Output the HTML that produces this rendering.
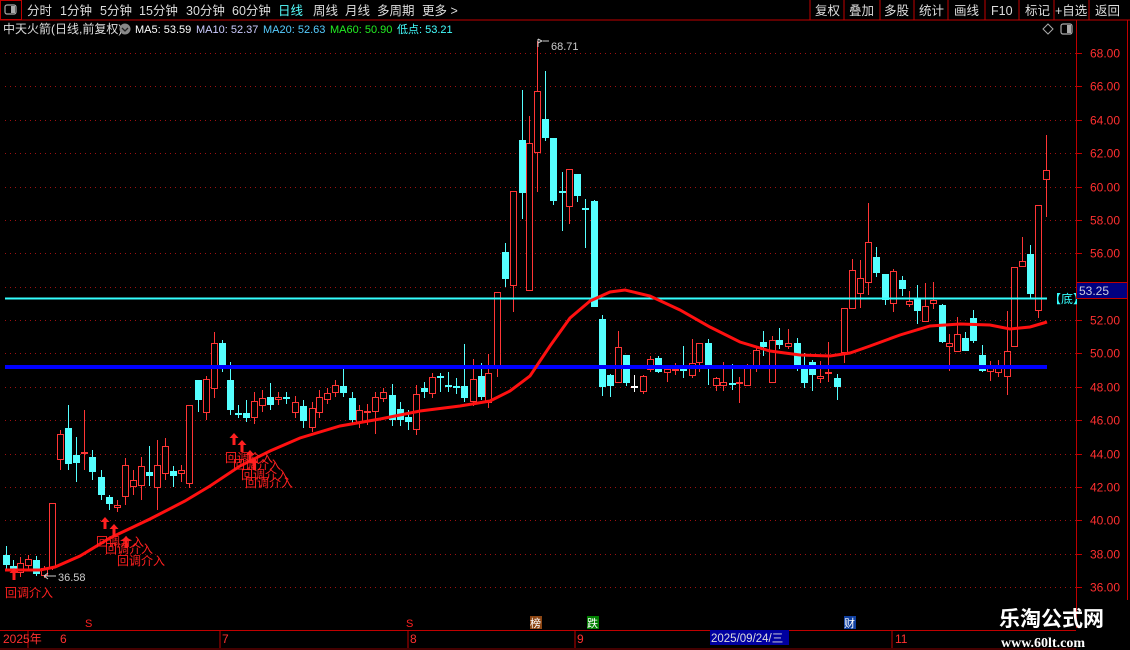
<!DOCTYPE html>
<html><head><meta charset="utf-8">
<style>
html,body{margin:0;padding:0;background:#000;width:1130px;height:650px;overflow:hidden;font-family:"Liberation Sans","Noto Sans CJK SC",sans-serif}
svg{position:absolute;left:0;top:0}
</style></head><body>
<svg id="s" width="1130" height="650" xmlns="http://www.w3.org/2000/svg" font-family="Liberation Sans, Noto Sans CJK SC, sans-serif">
<rect width="1130" height="650" fill="#000"/>
<line x1="0" y1="20" x2="1130" y2="20" stroke="#c00000"/>
<rect x="0.5" y="0.5" width="21" height="19" fill="none" stroke="#c00000"/>
<rect x="5" y="5" width="11" height="9" rx="2" fill="none" stroke="#aaa" stroke-width="1.2"/><rect x="11" y="6" width="4" height="7" fill="#aaa"/>
<g font-size="12.5" fill="#ddd">
<text x="27" y="15">分时</text><text x="60" y="15">1分钟</text><text x="100" y="15">5分钟</text><text x="139" y="15">15分钟</text><text x="186" y="15">30分钟</text><text x="232" y="15">60分钟</text>
<text x="278" y="15" fill="#5ff">日线</text><text x="313" y="15">周线</text><text x="345" y="15">月线</text><text x="377" y="15">多周期</text><text x="422" y="15">更多 &gt;</text>
</g>
<g stroke="#c00000"><line x1="810" y1="0" x2="810" y2="20"/><line x1="844" y1="0" x2="844" y2="20"/><line x1="880" y1="0" x2="880" y2="20"/><line x1="914" y1="0" x2="914" y2="20"/><line x1="948" y1="0" x2="948" y2="20"/><line x1="985" y1="0" x2="985" y2="20"/><line x1="1019" y1="0" x2="1019" y2="20"/><line x1="1054" y1="0" x2="1054" y2="20"/><line x1="1089" y1="0" x2="1089" y2="20"/></g>
<g font-size="12.5" fill="#ddd">
<text x="815" y="15">复权</text><text x="849" y="15">叠加</text><text x="884" y="15">多股</text><text x="919" y="15">统计</text><text x="954" y="15">画线</text><text x="991" y="15">F10</text><text x="1025" y="15">标记</text><text x="1055" y="15">+自选</text><text x="1095" y="15">返回</text>
</g>
<g font-size="11">
<text x="3" y="33" fill="#ddd" font-size="12">中天火箭(日线,前复权)</text>
<circle cx="125" cy="29" r="5.5" fill="#888"/><path d="M122 28l3 3 3-3" stroke="#222" stroke-width="1.3" fill="none"/>
<text x="135" y="33" fill="#fff">MA5: 53.59</text>
<text x="196" y="33" fill="#ccccff">MA10: 52.37</text>
<text x="263" y="33" fill="#5cf">MA20: 52.63</text>
<text x="330" y="33" fill="#2e2">MA60: 50.90</text>
<text x="397" y="33" fill="#4ff">低点: 53.21</text>
</g>
<path d="M1048 24l5 5-5 5-5-5z" fill="none" stroke="#aaa"/>
<rect x="1061" y="24" width="11" height="10" rx="2" fill="none" stroke="#aaa" stroke-width="1.2"/><rect x="1067" y="25" width="4" height="8" fill="#aaa"/>
<line x1="1076.5" y1="20" x2="1076.5" y2="628" stroke="#c00000"/>
<line x1="1127.5" y1="20" x2="1127.5" y2="600" stroke="#c00000"/>
<g id="grid"></g>
<g id="candles"></g>
<line x1="5" y1="298.5" x2="1047" y2="298.5" stroke="#3ff" stroke-width="2"/>
<line x1="5" y1="367" x2="1047" y2="367" stroke="#00f" stroke-width="4"/>
<polyline fill="none" stroke="#ff1010" stroke-width="3" points="5,570 40,570 55,567 80,556 110,538 150,519 185,501 210,486 240,466 270,451 300,438 340,426 380,419 420,411 460,406 490,401 510,391 530,376 550,346 570,318 590,301 610,292 625,290 650,296 680,310 710,327 740,342 770,351 800,355 830,356 850,353 870,346 900,335 930,326 960,324 990,325 1010,329 1030,327 1047,322"/>
<g font-size="11" fill="#ccc"><path d="M538 39v8M538 39l4 2-4 2M543 41h6" stroke="#ccc" fill="none"/><text x="551" y="50">68.71</text>
<path d="M44 576h12M44 576l4-3M44 576l4 3" stroke="#ccc" fill="none"/><text x="58" y="581">36.58</text></g>
<text x="1049" y="303" font-size="12" fill="#3ff">【底】</text>
<rect x="1076.5" y="282.5" width="51" height="16" fill="#000080" stroke="#c00000"/>
<text x="1079" y="295" font-size="12" fill="#ccd">53.25</text>
<g id="sig" fill="#ff2020" font-size="12"></g>
<line x1="0" y1="630.5" x2="1076" y2="630.5" stroke="#c00000"/>
<line x1="0" y1="649" x2="1076" y2="649" stroke="#800"/>
<g stroke="#c00000"><line x1="28" y1="630" x2="28" y2="648"/><line x1="220" y1="630" x2="220" y2="648"/><line x1="408" y1="630" x2="408" y2="648"/><line x1="575" y1="630" x2="575" y2="648"/><line x1="892" y1="630" x2="892" y2="648"/></g>
<g font-size="12" fill="#ff3030"><text x="3" y="643">2025年</text><text x="60" y="643">6</text><text x="222" y="643">7</text><text x="410" y="643">8</text><text x="577" y="643">9</text><text x="895" y="643">11</text></g>
<rect x="710" y="630" width="79" height="15" fill="#0000a0"/><text x="711" y="642" font-size="11.5" fill="#ddd">2025/09/24/三</text>
<g font-size="11" fill="#ff2020"><text x="85" y="627">S</text><text x="406" y="627">S</text></g>
<rect x="530" y="616" width="12" height="13" fill="#8b4513"/><text x="530" y="627" font-size="11" fill="#fff">榜</text>
<rect x="587" y="616" width="12" height="13" fill="#008000"/><text x="587" y="627" font-size="11" fill="#fff">跌</text>
<rect x="844" y="616" width="12" height="13" fill="#1040a0"/><text x="844" y="627" font-size="11" fill="#fff">财</text>
<text x="999" y="626" font-size="21" font-weight="bold" fill="#fff" font-family="Noto Sans CJK SC, sans-serif">乐淘公式网</text>
<text x="1001" y="647" font-size="14" font-weight="bold" fill="#fff" font-family="Liberation Serif, serif">www.60lt.com</text>
</svg>
<script>
var NS="http://www.w3.org/2000/svg";
function el(p,t,a,txt){var e=document.createElementNS(NS,t);for(var k in a)e.setAttribute(k,a[k]);if(txt)e.textContent=txt;document.getElementById(p).appendChild(e);return e;}
for(var i=0;i<17;i++){var y=53+i*33.375;var yy=Math.round(y)+0.5;
 el('grid','line',{x1:5,y1:yy,x2:1076,y2:yy,stroke:'#a01010','stroke-dasharray':'1,4'});
 el('grid','line',{x1:1076,y1:yy,x2:1082,y2:yy,stroke:'#c00000'});
 el('grid','text',{x:1090,y:yy+4,fill:'#ff3030','font-size':'12'},(68-2*i).toFixed(2));}
var C=[[6,555,565,546,570,'c'],[13,566,570,560,574,'c'],[20,563,573,557,577,'r'],[28,559,566,555,570,'r'],[36,560,574,556,576,'c'],[44,568,576,566,578,'r'],[52,503,568,503,570,'r'],
[60,434,460,430,470,'r'],[68,428,464,405,470,'c'],[76,455,463,437,482,'c'],[84,452,453,410,470,'r'],[92,457,472,450,480,'c'],[101,477,495,470,500,'c'],[109,497,504,495,510,'c'],[117,505,508,500,512,'r'],
[125,465,497,458,505,'r'],[133,480,487,470,495,'r'],[141,466,486,457,500,'r'],[149,472,476,446,486,'c'],[157,465,488,440,510,'r'],[165,446,474,438,480,'r'],[173,471,476,466,487,'c'],[181,470,474,465,482,'r'],[189,405,484,405,488,'r'],
[198,380,400,380,412,'c'],[206,379,413,376,420,'r'],[214,343,389,332,398,'r'],[222,343,366,340,372,'c'],[230,380,410,362,415,'c'],[238,413,415,405,418,'c'],[246,413,418,400,422,'c'],[254,401,418,392,424,'r'],[262,398,406,390,412,'r'],[270,397,405,383,410,'c'],[278,397,400,392,405,'r'],[286,397,399,392,404,'c'],
[295,402,413,396,418,'r'],[303,406,421,400,428,'c'],[312,408,428,402,432,'r'],[319,397,413,390,418,'r'],[327,393,400,388,404,'r'],[335,385,393,380,397,'r'],[343,386,393,369,397,'c'],[352,398,420,392,424,'c'],[359,410,423,405,428,'r'],[367,411,413,404,425,'r'],
[375,397,412,392,434,'r'],[383,392,399,388,402,'r'],[392,395,420,384,426,'c'],[400,409,420,402,426,'c'],[408,417,422,410,430,'c'],[416,394,430,385,435,'r'],[424,388,392,382,398,'c'],[432,377,394,373,398,'r'],[440,376,378,373,392,'c'],[448,385,387,372,392,'c'],[456,386,388,378,394,'c'],
[464,386,398,344,402,'c'],[473,379,402,359,406,'r'],[481,376,397,363,400,'c'],[488,373,403,354,408,'r'],[497,292,369,292,377,'r'],[505,252,279,243,287,'c'],[513,191,286,191,312,'r'],[522,140,193,90,219,'c'],[529,143,291,116,291,'r'],[537,91,153,41,192,'r'],
[545,119,138,71,141,'c'],[553,138,201,138,205,'c'],[562,191,193,172,231,'c'],[569,169,207,169,224,'r'],[577,174,196,174,202,'c'],[585,208,210,199,248,'c'],[594,201,307,200,307,'c'],[602,319,387,315,396,'c'],[610,375,386,374,397,'c'],[618,347,383,331,383,'r'],[626,355,383,355,386,'c'],[634,386,388,375,392,'w'],
[643,376,392,375,394,'r'],[650,359,370,356,372,'r'],[658,358,372,356,373,'c'],[667,369,373,366,382,'r'],[675,369,371,363,375,'r'],[683,369,371,346,378,'c'],[692,363,376,339,378,'r'],[699,343,363,343,372,'r'],[708,343,365,339,385,'c'],[716,378,386,377,391,'r'],[723,382,386,362,391,'r'],[732,383,385,364,390,'c'],[739,382,384,377,403,'r'],
[747,367,386,364,386,'r'],[756,350,366,348,372,'r'],[763,342,347,331,356,'c'],[772,340,383,336,383,'r'],[779,340,345,328,349,'c'],[788,343,347,329,349,'r'],[797,343,365,338,371,'c'],[804,368,383,353,388,'c'],[812,362,375,360,391,'c'],[820,376,379,361,383,'r'],[828,372,374,342,382,'r'],[837,378,387,374,400,'c'],
[844,308,353,308,363,'r'],[852,270,309,259,308,'r'],[860,278,294,260,308,'r'],[868,242,283,203,295,'r'],[876,257,273,247,277,'c'],[885,274,300,274,305,'c'],[893,271,304,269,312,'r'],[902,280,289,276,296,'c'],[909,301,305,291,307,'r'],[917,299,311,285,324,'c'],[925,306,322,283,322,'r'],[933,300,304,282,309,'r'],
[942,305,342,304,343,'c'],[949,343,347,334,371,'r'],[957,334,352,317,352,'r'],[965,338,351,332,351,'c'],[973,318,341,310,343,'c'],[982,355,371,345,372,'c'],[990,367,372,361,381,'r'],[998,368,373,360,377,'r'],[1007,351,377,311,395,'r'],[1014,267,347,267,347,'r'],[1022,261,267,237,267,'r'],[1030,254,294,245,298,'c'],[1038,205,311,205,318,'r'],[1046,170,180,135,217,'r']];
C.forEach(function(c){var x=c[0],t=c[1],b=c[2];var col=c[5]=='c'?'#55ffff':(c[5]=='w'?'#ffffff':'#ff3535');
 el('candles','line',{x1:x+0.5,y1:c[3],x2:x+0.5,y2:c[4],stroke:col});
 if(b-t<=2){el('candles','line',{x1:x-3,y1:t+1,x2:x+4,y2:t+1,stroke:col,'stroke-width':2});}
 else if(c[5]=='c')el('candles','rect',{x:x-3,y:t,width:7,height:b-t,fill:col});
 else el('candles','rect',{x:x-2.5,y:t+0.5,width:6,height:b-t-1,fill:'#000',stroke:col});});
function sig(x,y){el('sig','path',{d:'M'+(x+4)+' '+(y-12)+'l-4.5 5h3v7h3v-7h3z'});el('sig','text',{x:x-5,y:y+17},'回调介入');}
sig(10,580);sig(101,529);sig(110,536);sig(122,548);sig(230,445);sig(238,452);sig(246,462);sig(250,470);
</script>
</body></html>
